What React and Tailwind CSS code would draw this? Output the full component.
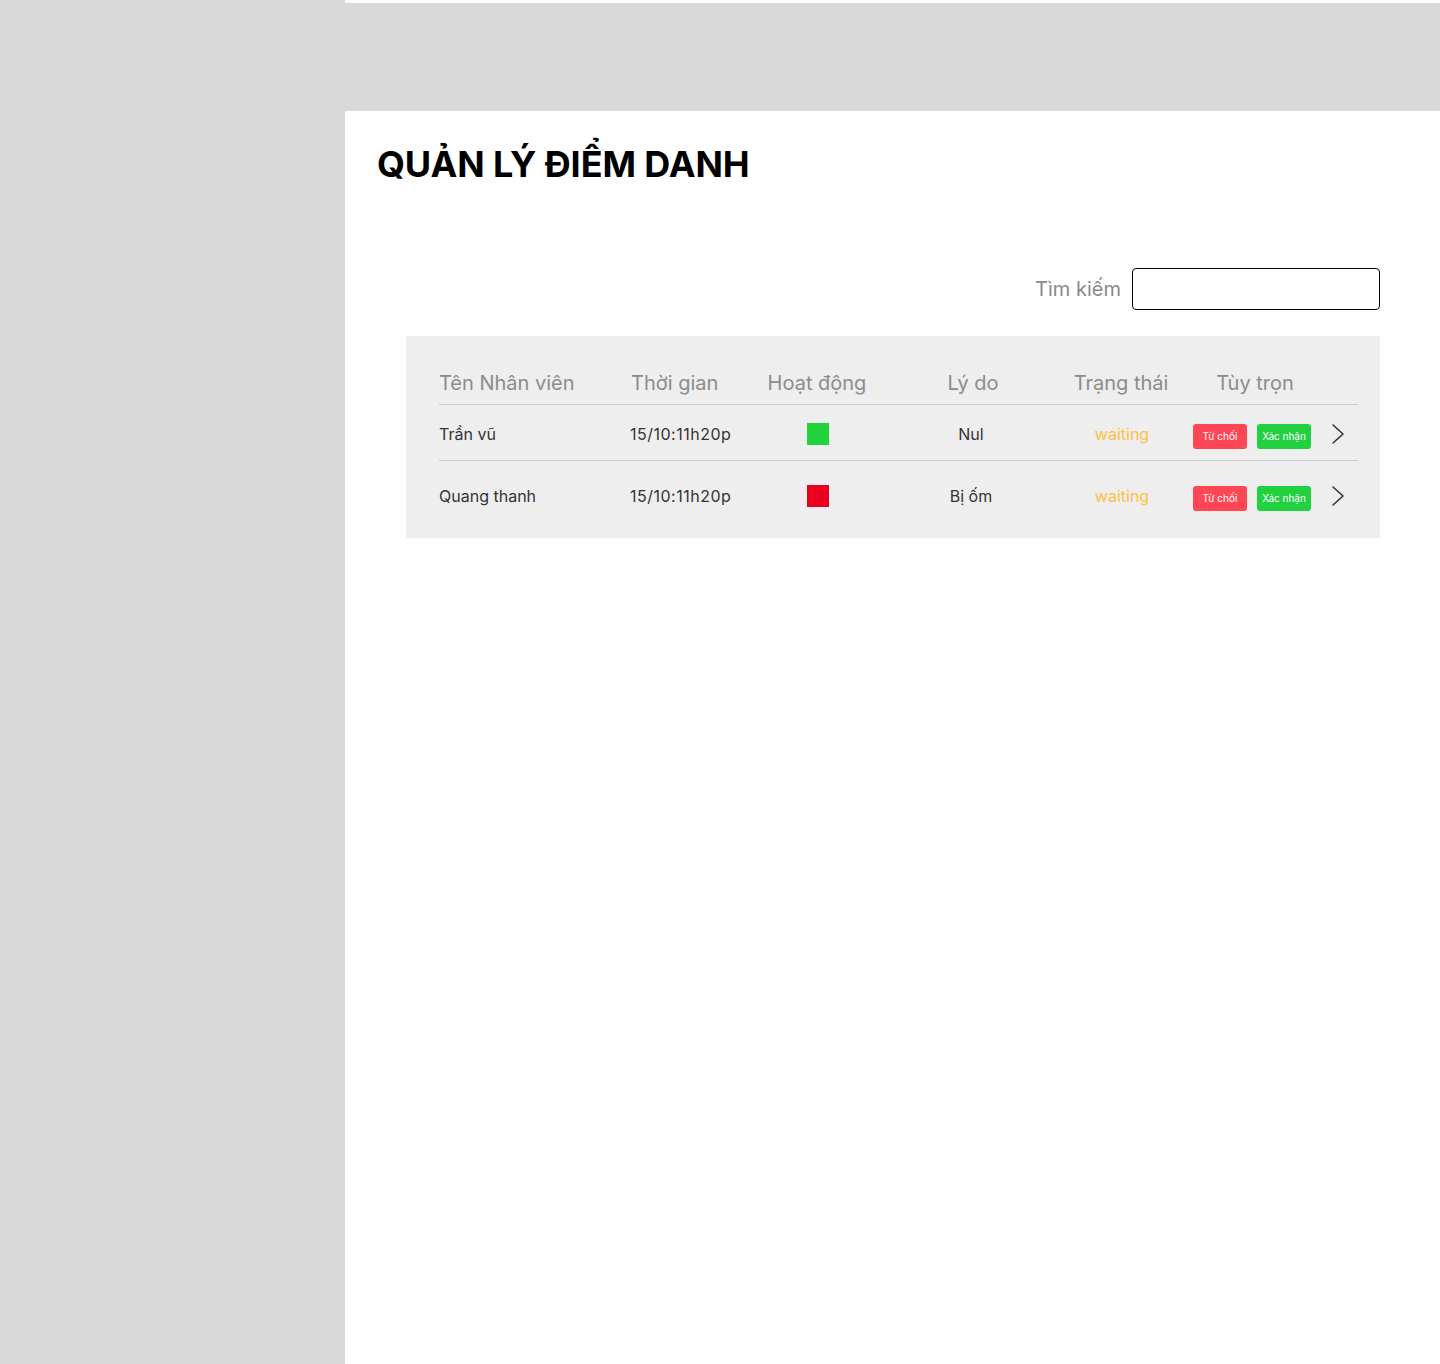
import React from "react";

const rows = [
  { name: "Trần vũ", time: "15/10:11h20p", color: "bg-[#22d33d]", reason: "Nul", h: "h-[56px] pt-[3px]" },
  { name: "Quang thanh", time: "15/10:11h20p", color: "bg-[#e8001c]", reason: "Bị ốm", h: "h-[70px]" },
];

function Chevron() {
  return (
    <svg width="14" height="22" viewBox="0 0 14 22" fill="none">
      <polyline points="2,2 12,11 2,20" stroke="#333" strokeWidth="1.6" strokeLinecap="round" strokeLinejoin="round" />
    </svg>
  );
}

export default function App() {
  return (
    <div className="flex min-h-[1364px] w-[1440px] bg-white" style={{ fontFamily: "Inter, 'Noto Sans', sans-serif" }}>
      <aside className="w-[345px] shrink-0 bg-[#d9d9d9]" />
      <main className="flex-1 flex flex-col">
        <div className="mt-[3px] h-[108px] bg-[#d9d9d9]" />
        <h1 className="ml-[32px] mt-[32px] text-[36px] leading-[42px] font-bold text-black tracking-[-0.1px]">QUẢN LÝ ĐIỂM DANH</h1>
        <div className="mt-[83px] mr-[60px] flex items-center justify-end gap-[11px]">
          <span className="text-[20px] text-[#8a8a8a]">Tìm kiếm</span>
          <div className="w-[248px] h-[42px] border border-black rounded-[4px] bg-white" />
        </div>
        <div className="mt-[26px] ml-[61px] mr-[60px] bg-[#eeeeee] pl-[33px] pr-[22px] pt-[33px] pb-[7px]">
          <div className="flex h-[36px] items-start border-b border-[#cccccc] text-[20px] leading-[28px] text-[#8c8c8c]">
            <div className="w-[191px]">Tên Nhân viên</div>
            <div className="w-[127px] pl-[1px]">Thời gian</div>
            <div className="w-[120px] text-center">Hoạt động</div>
            <div className="w-[188px] text-center pl-[4px]">Lý do</div>
            <div className="w-[112px] text-center">Trạng thái</div>
            <div className="w-[16px]" />
            <div className="w-[124px] text-center">Tùy trọn</div>
          </div>
          {rows.map((r, i) => (
            <div key={i} className={`flex items-center text-[16px] text-[#333333] ${r.h} ${i === 0 ? "border-b border-[#cccccc]" : ""}`}>
              <div className="w-[191px]">{r.name}</div>
              <div className="w-[127px] tracking-[0.5px]">{r.time}</div>
              <div className="w-[120px] flex justify-center pl-[2px]">
                <div className={`w-[22px] h-[22px] ${r.color}`} />
              </div>
              <div className="w-[188px] text-center">{r.reason}</div>
              <div className="w-[112px] text-center text-[#ffc142] pl-[2px]">waiting</div>
              <div className="w-[16px]" />
              <div className="w-[124px] flex items-center gap-[10px] pt-[4px]">
                <button className="w-[54px] h-[25px] rounded-[3px] bg-[#ff4655] text-white text-[10px]">Từ chối</button>
                <button className="w-[54px] h-[25px] rounded-[3px] bg-[#22d13f] text-white text-[10px]">Xác nhận</button>
              </div>
              <div className="ml-[14px] flex items-center"><Chevron /></div>
            </div>
          ))}
        </div>
      </main>
    </div>
  );
}
